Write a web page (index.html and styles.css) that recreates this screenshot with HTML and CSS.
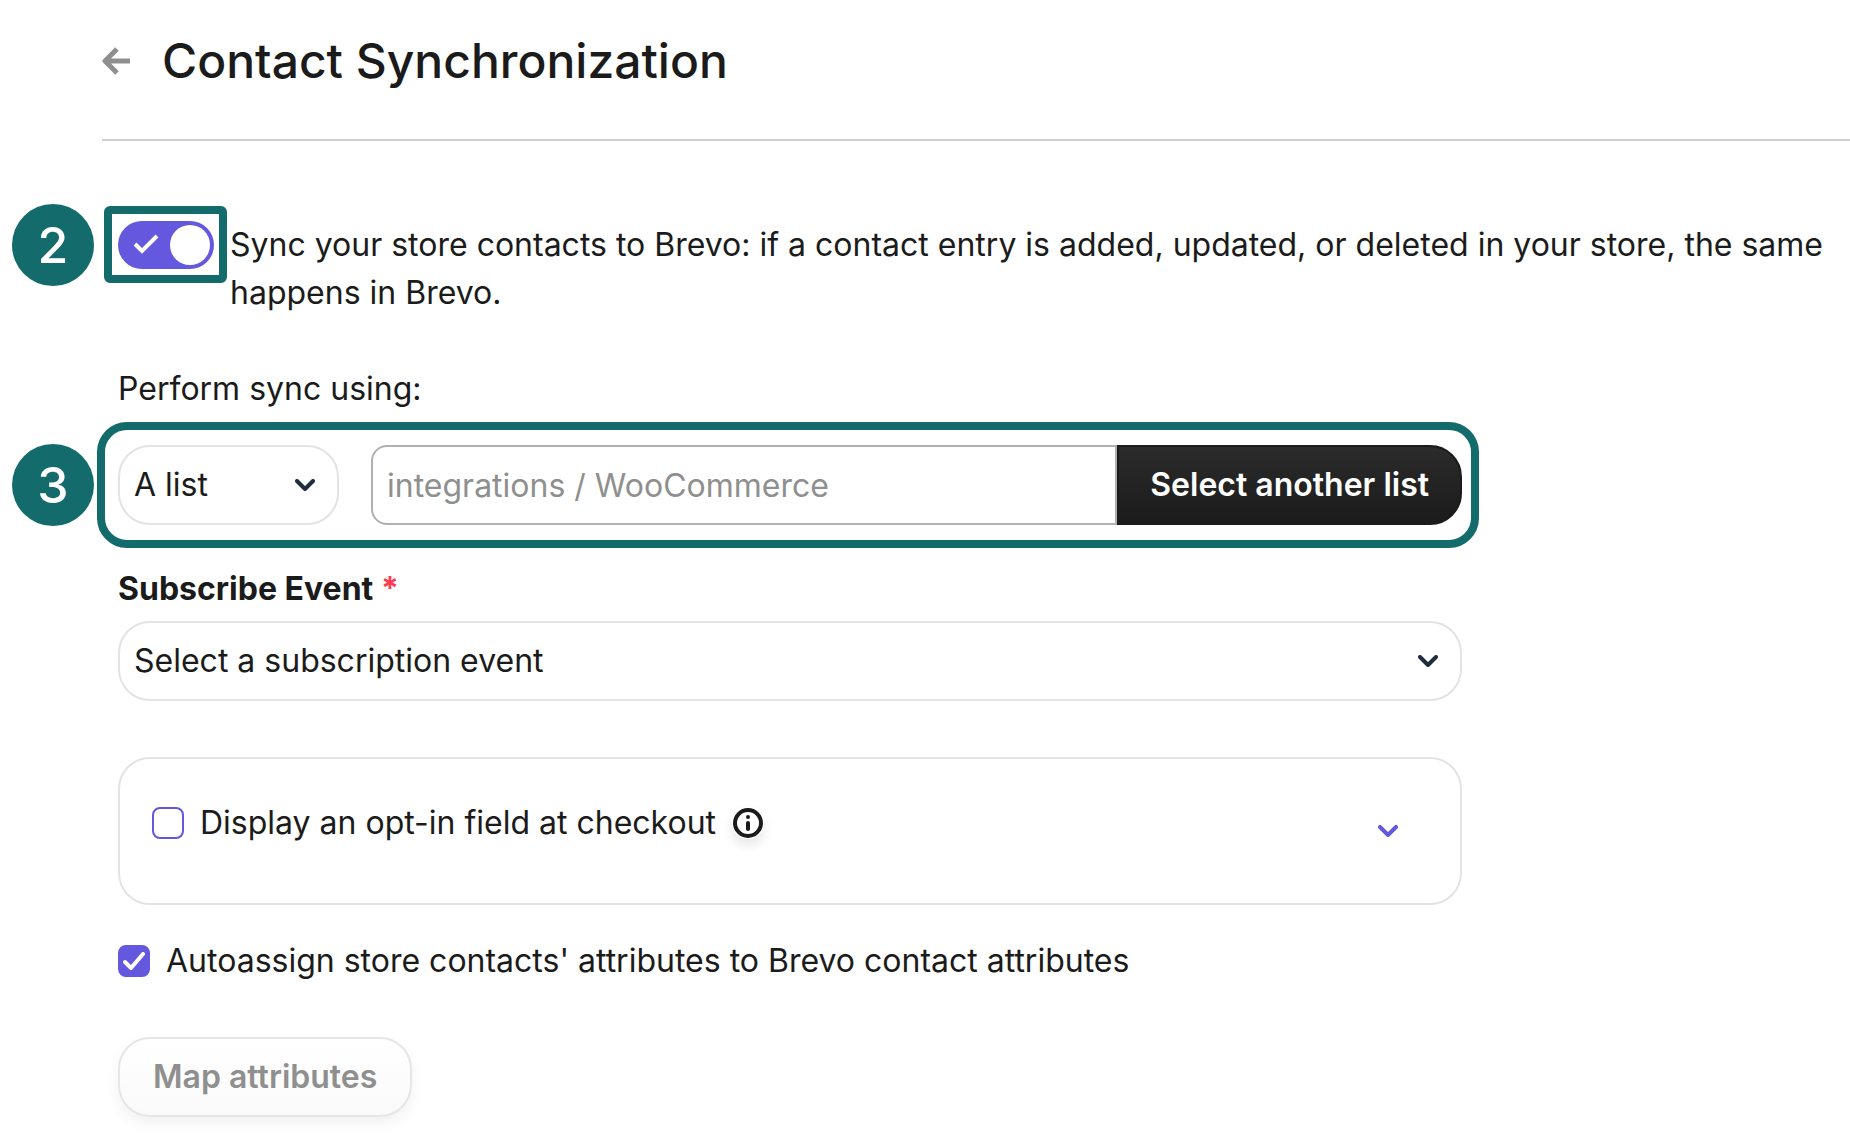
FILE: index.html
```html
<!DOCTYPE html>
<html lang="en">
<head>
    <meta charset="UTF-8">
    <meta name="viewport" content="width=device-width, initial-scale=1.0">
    <title>Contact Synchronization</title>
    <link rel="stylesheet" href="styles.css">
</head>
<body>

    <header class="page-header">
        <a href="#" class="back-link" aria-label="Back">
            <svg width="28" height="30" viewBox="0 0 28 30" fill="none" stroke="currentColor" stroke-width="5" stroke-linejoin="round">
                <path d="M28 15H4M15 3L3 15l12 12"/>
            </svg>
        </a>
        <h1>Contact Synchronization</h1>
    </header>

    <form class="sync-form">

        <!-- Step 2: sync toggle -->
        <div class="sync-row">
            <span class="step">2</span>
            <div class="toggle-box">
                <input type="checkbox" id="syncContacts" class="toggle" checked>
                <svg class="toggle-check" width="26" height="20" viewBox="0 0 26 20" fill="none" stroke="white" stroke-width="4">
                    <path d="M2 10l7 7L24 2"/>
                </svg>
            </div>
            <label for="syncContacts">Sync your store contacts to Brevo: if a contact entry is added, updated, or deleted in your store, the same happens in Brevo.</label>
        </div>

        <div class="fields">
            <!-- Step 3: list picker -->
            <label for="syncType" class="sync-label">Perform sync using:</label>
            <div class="picker">
                <span class="step">3</span>
                <div class="select type-select">
                    <select id="syncType">
                        <option>A list</option>
                        <option>A folder</option>
                    </select>
                    <svg class="chevron" width="20" height="12" viewBox="0 0 20 12"><path d="M2 2l8 8 8-8"/></svg>
                </div>
                <div class="list-group">
                    <input type="text" class="list-name" placeholder="integrations / WooCommerce" aria-label="Selected list" readonly>
                    <button type="button" class="btn-dark">Select another list</button>
                </div>
            </div>

            <!-- Subscribe event -->
            <label for="subscribeEvent" class="event-label">Subscribe Event <span class="required">*</span></label>
            <div class="select">
                <select id="subscribeEvent">
                    <option>Select a subscription event</option>
                </select>
                <svg class="chevron" width="20" height="12" viewBox="0 0 20 12"><path d="M2 2l8 8 8-8"/></svg>
            </div>

            <!-- Opt-in -->
            <div class="card">
                <div class="option">
                    <input type="checkbox" id="optIn" class="checkbox">
                    <label for="optIn">Display an opt-in field at checkout</label>
                    <svg class="info" width="32" height="32" viewBox="0 0 32 32">
                        <circle cx="16" cy="16" r="13" fill="white" stroke="#1b1b1b" stroke-width="4"/>
                        <circle cx="16" cy="10" r="2" fill="#1b1b1b"/>
                        <path d="M16 16v6" stroke="#1b1b1b" stroke-width="4" stroke-linecap="round"/>
                    </svg>
                </div>
                <button type="button" class="expand" aria-label="Show opt-in settings">
                    <svg class="chevron" width="20" height="12" viewBox="0 0 20 12"><path d="M2 2l8 8 8-8"/></svg>
                </button>
            </div>

            <!-- Attributes -->
            <div class="option">
                <span class="check-wrap">
                    <input type="checkbox" id="autoAssign" class="checkbox" checked>
                    <svg class="check-mark" width="22" height="18" viewBox="0 0 22 18" fill="none" stroke="white" stroke-width="4" stroke-linecap="round" stroke-linejoin="round">
                        <path d="M2 10l6 6L20 2"/>
                    </svg>
                </span>
                <label for="autoAssign">Autoassign store contacts' attributes to Brevo contact attributes</label>
            </div>

            <button type="button" class="btn-light" disabled>Map attributes</button>
        </div>
    </form>

</body>
</html>
```

FILE: styles.css
```css
* {
    box-sizing: border-box;
}
body {
    margin: 0;
    font-family: Inter, "Liberation Sans", sans-serif;
    font-size: 32px;
    line-height: 48px;
    color: #1b1b1b;
    background: white;
}
input, select, button {
    margin: 0;
    font: inherit;
}
.page-header {
    display: flex;
    align-items: center;
    gap: 32px;
    margin-left: 102px;
    padding: 33px 0 50px;
    border-bottom: 2px solid #cfcfcf;
}
.page-header h1 {
    margin: 0;
    font-size: 48px;
    font-weight: 500;
    line-height: 56px;
}
.back-link {
    display: flex;
    color: #8f8f8f;
}
.sync-form {
    padding: 80px 16px 24px 118px;
}

/* Numbered steps */
.step {
    position: absolute;
    left: -106px;
    top: 50%;
    width: 82px;
    height: 82px;
    margin-top: -41px;
    border-radius: 50%;
    background: #136c6b;
    color: white;
    font-size: 50px;
    font-weight: 500;
    line-height: 82px;
    text-align: center;
}
.sync-row {
    position: relative;
    display: flex;
    align-items: flex-start;
    gap: 16px;
}
.sync-row .step {
    top: 24px;
}

/* Toggle */
.toggle-box {
    position: relative;
    display: flex;
    flex: none;
}
.toggle-box::before,
.picker::before {
    content: "";
    position: absolute;
    border: 8px solid #136c6b;
    pointer-events: none;
}
.toggle-box::before {
    inset: -15px -13px -14px -14px;
    border-radius: 6px;
}
.toggle {
    appearance: none;
    display: flex;
    width: 96px;
    height: 48px;
    padding: 4px;
    border-radius: 24px;
    background: #6358de;
}
.toggle::before {
    content: "";
    width: 40px;
    height: 40px;
    border-radius: 50%;
    background: white;
}
.toggle:checked::before {
    margin-left: auto;
}
.toggle-check {
    position: absolute;
    left: 15px;
    top: 13px;
    pointer-events: none;
}

/* Fields */
.fields {
    display: flex;
    flex-direction: column;
    max-width: 1344px;
    margin-top: 48px;
}
.picker {
    position: relative;
    display: flex;
    gap: 32px;
    margin: 32px 0 40px;
}
.picker::before {
    inset: -23px -17px -23px -21px;
    border-radius: 30px;
}
.select {
    position: relative;
}
.type-select {
    flex: 0 0 221px;
}
.select select {
    appearance: none;
    display: block;
    width: 100%;
    height: 80px;
    padding: 0 56px 0 14px;
    border: 2px solid #e3e3e3;
    border-radius: 32px;
    background: white;
    color: inherit;
}
.chevron {
    fill: none;
    stroke: currentColor;
    stroke-width: 4;
    stroke-linecap: round;
    stroke-linejoin: round;
}
.select .chevron {
    position: absolute;
    right: 24px;
    top: 34px;
    color: #1f2d3d;
    pointer-events: none;
}
.list-group {
    display: flex;
    flex: 1;
    min-width: 0;
}
.list-name {
    flex: 1;
    min-width: 0;
    height: 80px;
    padding: 0 14px;
    border: 2px solid #b0b0b0;
    border-radius: 16px 0 0 16px;
    background: white;
}
.list-name::placeholder {
    color: #8f8f8f;
    opacity: 1;
}
.btn-dark {
    padding: 0 31px;
    border: 2px solid #1b1b1b;
    border-radius: 0 32px 32px 0;
    background: linear-gradient(#2b2b2b, #1b1b1b);
    color: white;
    font-weight: 600;
    cursor: pointer;
}
.event-label {
    margin-bottom: 8px;
    font-weight: 700;
}
.required {
    color: #ff3b52;
}

/* Opt-in card */
.card {
    display: flex;
    align-items: center;
    justify-content: space-between;
    margin: 56px 0 32px;
    padding: 40px 62px 40px 32px;
    border: 2px solid #e3e3e3;
    border-radius: 32px;
}
.card .option {
    padding-bottom: 16px;
}
.option {
    display: flex;
    align-items: center;
    gap: 16px;
}
.expand {
    display: flex;
    padding: 0;
    border: none;
    background: none;
    color: #6358de;
    cursor: pointer;
}
.info {
    border-radius: 50%;
    box-shadow: 0 6px 12px rgba(0, 0, 0, 0.1);
}
.checkbox {
    appearance: none;
    display: block;
    width: 32px;
    height: 32px;
    border: 2px solid #6358de;
    border-radius: 8px;
    background: white;
}
.checkbox:checked {
    background: #6358de;
}
.check-wrap {
    position: relative;
}
.check-mark {
    position: absolute;
    left: 5px;
    top: 7px;
    pointer-events: none;
}
.btn-light {
    align-self: flex-start;
    height: 80px;
    margin-top: 52px;
    padding: 0 33px;
    border: 2px solid #e6e6e6;
    border-radius: 32px;
    background: linear-gradient(#ffffff, #fafafa);
    box-shadow: 0 6px 14px rgba(0, 0, 0, 0.06);
    color: #8f8f8f;
    font-weight: 600;
}
```
